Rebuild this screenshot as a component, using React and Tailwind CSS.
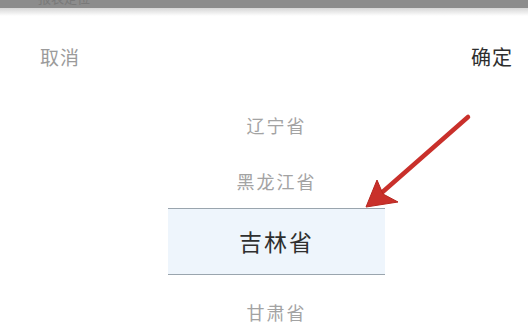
const provinces = [
  { name: "辽宁省", h: "h-[54px]" },
  { name: "黑龙江省", h: "h-[56px] pt-[3px]" },
];

function Arrow() {
  return (
    <svg
      className="pointer-events-none absolute left-0 top-0"
      width="528"
      height="330"
      viewBox="0 0 528 330"
    >
      <line x1="468" y1="117" x2="378" y2="196" stroke="#c9302b" strokeWidth="4.5" strokeLinecap="round" />
      <polygon points="366,207 377,180 383,194 398,202" fill="#c9302b" stroke="#b7261f" strokeWidth="1" strokeLinejoin="round" />
    </svg>
  );
}

export default function App() {
  return (
    <div
      className="relative h-[330px] w-[528px] overflow-hidden bg-white"
      style={{ fontFamily: '"Noto Sans CJK SC", "Noto Sans", sans-serif' }}
    >
      {/* 上方被遮住的标题栏 */}
      <div className="h-[8px] overflow-hidden bg-[#8c8c8c] pl-[38px]">
        <span className="-mt-[10px] block text-[13px] leading-[16px] text-[#6e6e6e] opacity-60">报表定位</span>
      </div>
      <div className="h-[8px] bg-gradient-to-b from-[#d6d6d6] to-white" />

      <div className="flex h-[82px] items-center justify-between pl-[40px] pr-[15px]">
        <span className="text-[19px] tracking-[1px] text-[#9b9b9b]">取消</span>
        <span className="text-[20px] tracking-[1px] text-[#2e2e2e]">确定</span>
      </div>

      <div className="ml-[168px] flex w-[217px] flex-col">
        {provinces.map((p) => (
          <div key={p.name} className={`flex ${p.h} items-center justify-center text-[18px] tracking-[2px] text-[#a3a3a3]`}>
            {p.name}
          </div>
        ))}
        <div className="flex h-[67px] items-center justify-center border-y border-[#9aa5ae] bg-[#eef5fc] text-[23px] tracking-[2px] text-[#2f2f2f]">
          吉林省
        </div>
        <div className="flex h-[74px] items-center justify-center text-[18px] tracking-[2px] text-[#a3a3a3]">
          甘肃省
        </div>
      </div>

      <Arrow />
    </div>
  );
}
